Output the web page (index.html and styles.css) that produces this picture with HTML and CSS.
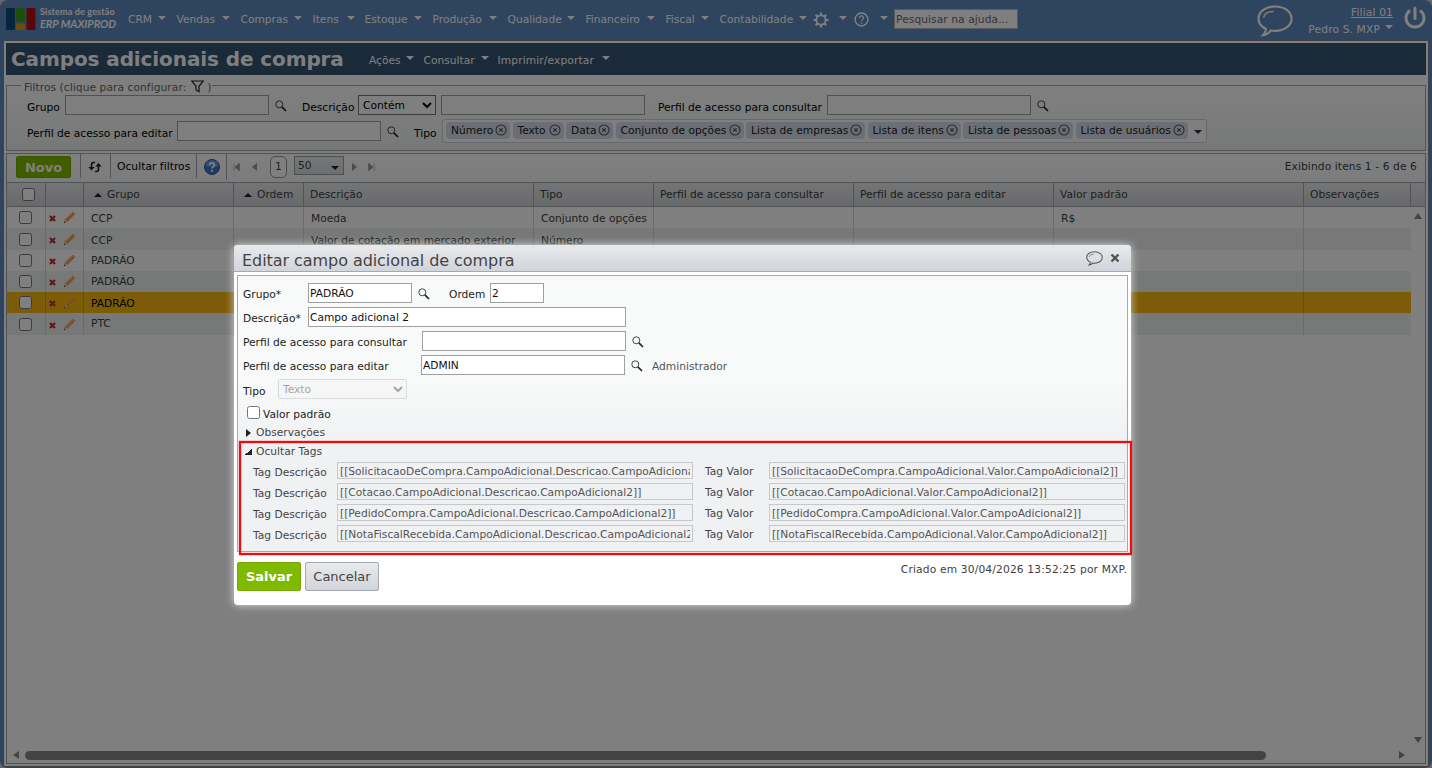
FILE: index.html
```html
<!DOCTYPE html>
<html lang="pt-BR">
<head>
    <meta charset="UTF-8">
    <title>Campos adicionais de compra</title>
    <link rel="stylesheet" href="styles.css">
</head>
<body>
    <!-- ícones reutilizados -->
    <svg class="defs" width="0" height="0">
        <symbol id="lupa" viewBox="0 0 12 12">
            <circle cx="4.300" cy="4.300" r="3.500" fill="none" stroke="#444" stroke-width="1"/>
            <path d="M6.900 6.900L11 11" stroke="#222" stroke-width="1.700"/>
        </symbol>
        <symbol id="lapis" viewBox="0 0 14 14">
            <path d="M1 13l1.200-4L10.600.9l2.500 2.300L4.700 11.500z" fill="#f0953e"/>
            <path d="M2.500 9.200L10.600 1.200l1 .9-8 8z" fill="#ffb469"/>
            <path d="M1 13l1.200-4 2.500 2.500z" fill="#ecd2a8"/>
            <path d="M.8 13.300l.7-1.900 1.100 1.200z" fill="#444"/>
        </symbol>
        <symbol id="excluir" viewBox="0 0 7 7">
            <path d="M1 1l5 5M6 1L1 6" stroke="#c2262b" stroke-width="2.100"/>
        </symbol>
        <symbol id="remover" viewBox="0 0 12 12">
            <circle cx="6" cy="6" r="5" fill="none" stroke="#555" stroke-width="1.100"/>
            <path d="M4.300 4.300l3.400 3.400M7.700 4.300L4.300 7.700" stroke="#555" stroke-width="1.200"/>
        </symbol>
        <symbol id="balao" viewBox="0 0 36 32">
            <path d="M18 1.500C8.600 1.500 1.500 6.500 1.500 13.500c0 4.500 2.800 8.200 7.300 10.200.3 2.600-.8 4.800-2.600 6.400 3.300-.3 5.800-1.800 7.400-4.600 1.400.3 2.900.4 4.400.4 9.400 0 16.500-5.200 16.500-12.200S27.400 1.500 18 1.500z" fill="none" stroke="currentColor" stroke-width="2.200"/>
            <path d="M6.500 12.500C7.500 9 11.500 6.700 16.500 6.500" fill="none" stroke="currentColor" stroke-width="1.500"/>
        </symbol>
    </svg>

    <div class="page">
        <div class="topbar">
            <div class="logo">
                <svg width="30" height="22" viewBox="0 0 30 22">
                    <rect x="0" y="0" width="9" height="22" rx="1.500" fill="#0d4a7c"/>
                    <rect x="10" y="0" width="9" height="14" rx="1.500" fill="#3f9a1a"/>
                    <rect x="10" y="15.500" width="9" height="6.500" rx="1.500" fill="#d99a14"/>
                    <rect x="20.500" y="0" width="9" height="22" rx="1.500" fill="#b80d12"/>
                </svg>
                <div class="logo-text">
                    <span class="logo-small">Sistema de gestão</span>
                    <span class="logo-big">ERP MAXIPROD</span>
                </div>
            </div>
            <div class="menu">
                <span class="m-crm">CRM<i></i></span>
                <span class="m-vendas">Vendas<i></i></span>
                <span class="m-compras">Compras<i></i></span>
                <span class="m-itens">Itens<i></i></span>
                <span class="m-estoque">Estoque<i></i></span>
                <span class="m-producao">Produção<i></i></span>
                <span class="m-qualidade">Qualidade<i></i></span>
                <span class="m-financeiro">Financeiro<i></i></span>
                <span class="m-fiscal">Fiscal<i></i></span>
                <span class="m-contab">Contabilidade<i></i></span>
                <span class="m-icon">
                    <svg width="16" height="16" viewBox="0 0 16 16">
                        <circle cx="8" cy="8" r="4.600" fill="none" stroke="#fff" stroke-width="1.800"/>
                        <path d="M8 .5v3M8 12.500v3M.5 8h3M12.500 8h3M2.700 2.700l2 2M11.300 11.300l2 2M13.300 2.700l-2 2M4.700 11.300l-2 2" stroke="#fff" stroke-width="2.200"/>
                    </svg><i></i>
                </span>
                <span class="m-icon">
                    <svg width="15" height="15" viewBox="0 0 15 15">
                        <circle cx="7.500" cy="7.500" r="6.400" fill="none" stroke="#fff" stroke-width="1.500"/>
                        <path d="M5.500 6c0-2.800 4.200-2.600 4.100-.2C9.500 7.300 7.600 7.400 7.500 9M7.500 10.300v1.400" fill="none" stroke="#fff" stroke-width="1.200"/>
                    </svg><i></i>
                </span>
            </div>
            <input class="help-search" type="text" value="Pesquisar na ajuda...">
            <svg class="chat" width="36" height="32"><use href="#balao"/></svg>
            <div class="user">
                <a href="#">Filial 01</a>
                <span>Pedro S. MXP<i></i></span>
            </div>
            <svg class="power" width="22" height="24" viewBox="0 0 22 24">
                <path d="M6 4.500a9 9 0 1 0 10 0" fill="none" stroke="#fff" stroke-width="3"/>
                <path d="M11 2v10.500" stroke="#fff" stroke-width="3" stroke-linecap="round"/>
            </svg>
        </div>

        <div class="main">
            <div class="titlebar">
                <h1>Campos adicionais de compra</h1>
                <span class="t-acoes">Ações<i></i></span>
                <span class="t-consultar">Consultar<i></i></span>
                <span class="t-imprimir">Imprimir/exportar<i></i></span>
            </div>

            <div class="filters">
                <div class="legend">Filtros (clique para configurar:
                    <svg width="13" height="13" viewBox="0 0 13 13"><path d="M.8 1h11.400L8 6.300v5.500L5 10V6.300z" fill="none" stroke="#222" stroke-width="1.200"/></svg>)</div>
                <div class="filter-row">
                    <label class="f-grupo">Grupo</label>
                    <input class="box" type="text">
                    <svg class="lupa"><use href="#lupa"/></svg>
                    <label class="f-desc">Descrição</label>
                    <select class="f-select"><option>Contém</option></select>
                    <input class="box" type="text">
                    <label class="f-perfil">Perfil de acesso para consultar</label>
                    <input class="box" type="text">
                    <svg class="lupa"><use href="#lupa"/></svg>
                </div>
                <div class="filter-row">
                    <label class="f-editar">Perfil de acesso para editar</label>
                    <input class="box" type="text">
                    <svg class="lupa"><use href="#lupa"/></svg>
                    <label class="f-tipo">Tipo</label>
                    <div class="chips">
                        <span class="chip c1">Número<svg><use href="#remover"/></svg></span>
                        <span class="chip c2">Texto<svg><use href="#remover"/></svg></span>
                        <span class="chip c3">Data<svg><use href="#remover"/></svg></span>
                        <span class="chip c4">Conjunto de opções<svg><use href="#remover"/></svg></span>
                        <span class="chip c5">Lista de empresas<svg><use href="#remover"/></svg></span>
                        <span class="chip c6">Lista de itens<svg><use href="#remover"/></svg></span>
                        <span class="chip c7">Lista de pessoas<svg><use href="#remover"/></svg></span>
                        <span class="chip c8">Lista de usuários<svg><use href="#remover"/></svg></span>
                        <i></i>
                    </div>
                </div>
            </div>

            <div class="grid">
                <div class="toolbar">
                    <button class="btn-novo">Novo</button>
                    <div class="tool refresh">
                        <svg width="14" height="12" viewBox="0 0 14 12">
                            <path d="M7 1.500H5.500Q3.500 1.500 3.500 4v4M7 10.500h1.500q2 0 2-2.500V4" fill="none" stroke="#222" stroke-width="1.600"/>
                            <path d="M.3 6h6.400L3.500 9.600zM7.300 5.500h6.400L10.500 2z" fill="#222"/>
                        </svg>
                    </div>
                    <div class="tool ocultar">Ocultar filtros</div>
                    <div class="tool ajuda">
                        <svg width="16" height="16" viewBox="0 0 16 16">
                            <circle cx="8" cy="8" r="7.500" fill="#3f76c6" stroke="#2b57a0"/>
                            <path d="M1.500 7a6.500 6 0 0 1 13 0Q8 9 1.500 7z" fill="#6d9bdd"/>
                            <path d="M5.700 6.200c0-3 4.700-2.900 4.700-.2 0 1.700-2.300 1.700-2.300 3.500M8.100 10.800v2" fill="none" stroke="#fff" stroke-width="1.800"/>
                        </svg>
                    </div>
                    <div class="pager">
                        <svg width="7" height="8" viewBox="0 0 7 8"><path d="M1 0v8M6.500 0v8L2 4z" fill="#999" stroke="#999" stroke-width=".6"/></svg>
                        <svg width="5" height="8" viewBox="0 0 5 8"><path d="M5 0v8L0 4z" fill="#999"/></svg>
                        <span class="current">1</span>
                        <span class="size">50<i></i></span>
                        <svg width="5" height="8" viewBox="0 0 5 8"><path d="M0 0v8l5-4z" fill="#999"/></svg>
                        <svg width="7" height="8" viewBox="0 0 7 8"><path d="M6.200 0v8M.5 0v8L5 4z" fill="#999" stroke="#999" stroke-width=".6"/></svg>
                    </div>
                    <div class="count">Exibindo itens 1 - 6 de 6</div>
                </div>

                <table>
                    <colgroup>
                        <col class="w1"><col class="w2"><col class="w3"><col class="w4"><col class="w5"><col class="w6"><col class="w7"><col class="w7"><col class="w8"><col class="w9"><col class="w10">
                    </colgroup>
                    <tr class="head">
                        <th class="chk"><input type="checkbox"></th>
                        <th></th>
                        <th><b></b>Grupo</th>
                        <th><b></b>Ordem</th>
                        <th>Descrição</th>
                        <th>Tipo</th>
                        <th>Perfil de acesso para consultar</th>
                        <th>Perfil de acesso para editar</th>
                        <th>Valor padrão</th>
                        <th>Observações</th>
                        <th></th>
                    </tr>
                    <tr class="low">
                        <td class="chk"><input type="checkbox"></td>
                        <td class="acts"><svg class="del"><use href="#excluir"/></svg><svg class="edit"><use href="#lapis"/></svg></td>
                        <td>CCP</td><td></td><td>Moeda</td><td>Conjunto de opções</td><td></td><td></td><td>R$</td><td></td><td class="rail"></td>
                    </tr>
                    <tr class="alt tall low">
                        <td class="chk"><input type="checkbox"></td>
                        <td class="acts"><svg class="del"><use href="#excluir"/></svg><svg class="edit"><use href="#lapis"/></svg></td>
                        <td>CCP</td><td></td><td>Valor de cotação em mercado exterior</td><td>Número</td><td></td><td></td><td></td><td></td><td class="rail"></td>
                    </tr>
                    <tr>
                        <td class="chk"><input type="checkbox"></td>
                        <td class="acts"><svg class="del"><use href="#excluir"/></svg><svg class="edit"><use href="#lapis"/></svg></td>
                        <td>PADRÃO</td><td></td><td></td><td></td><td></td><td></td><td></td><td></td><td class="rail"></td>
                    </tr>
                    <tr class="alt">
                        <td class="chk"><input type="checkbox"></td>
                        <td class="acts"><svg class="del"><use href="#excluir"/></svg><svg class="edit"><use href="#lapis"/></svg></td>
                        <td>PADRÃO</td><td></td><td></td><td></td><td></td><td></td><td></td><td></td><td class="rail"></td>
                    </tr>
                    <tr class="selected low">
                        <td class="chk"><input type="checkbox"></td>
                        <td class="acts"><svg class="del"><use href="#excluir"/></svg><svg class="edit"><use href="#lapis"/></svg></td>
                        <td>PADRÃO</td><td></td><td></td><td></td><td></td><td></td><td></td><td></td><td class="rail"></td>
                    </tr>
                    <tr class="alt tall">
                        <td class="chk"><input type="checkbox"></td>
                        <td class="acts"><svg class="del"><use href="#excluir"/></svg><svg class="edit"><use href="#lapis"/></svg></td>
                        <td>PTC</td><td></td><td></td><td></td><td></td><td></td><td></td><td></td><td class="rail"></td>
                    </tr>
                </table>

                <!-- barras de rolagem -->
                <div class="vscroll"><i class="up"></i><i class="down"></i></div>
                <div class="hscroll"><i class="left"></i><div class="thumb"></div><i class="right"></i></div>
            </div>
        </div>
    </div>

    <div class="overlay"></div>

    <div class="modal">
        <div class="modal-head">
            <h2>Editar campo adicional de compra</h2>
            <svg class="modal-chat" width="17" height="15"><use href="#balao"/></svg>
            <svg width="10" height="10" viewBox="0 0 10 10"><path d="M1.500 1.500l7 7M8.500 1.500l-7 7" stroke="#555" stroke-width="2.400"/></svg>
        </div>
        <div class="form">
            <div class="row">
                <label class="l-grupo">Grupo*</label>
                <input class="i-grupo" type="text" value="PADRÃO">
                <svg class="lupa"><use href="#lupa"/></svg>
                <label class="l-ordem">Ordem</label>
                <input class="i-ordem" type="text" value="2">
            </div>
            <div class="row">
                <label class="l-grupo">Descrição*</label>
                <input class="i-desc" type="text" value="Campo adicional 2">
            </div>
            <div class="row">
                <label class="l-cons">Perfil de acesso para consultar</label>
                <input class="i-perfil" type="text">
                <svg class="lupa"><use href="#lupa"/></svg>
            </div>
            <div class="row">
                <label class="l-edit">Perfil de acesso para editar</label>
                <input class="i-perfil" type="text" value="ADMIN">
                <svg class="lupa"><use href="#lupa"/></svg>
                <span class="admin">Administrador</span>
            </div>
            <div class="row">
                <label class="l-tipo">Tipo</label>
                <select disabled><option>Texto</option></select>
            </div>
            <div class="row check">
                <input type="checkbox"><label>Valor padrão</label>
            </div>
            <div class="toggle"><i class="closed"></i>Observações</div>
            <div class="toggle"><i class="open"></i>Ocultar Tags</div>
            <div class="tags">
                <label>Tag Descrição</label>
                <input type="text" readonly value="[[SolicitacaoDeCompra.CampoAdicional.Descricao.CampoAdicional2]]">
                <label class="valor">Tag Valor</label>
                <input type="text" readonly value="[[SolicitacaoDeCompra.CampoAdicional.Valor.CampoAdicional2]]">
                <label>Tag Descrição</label>
                <input type="text" readonly value="[[Cotacao.CampoAdicional.Descricao.CampoAdicional2]]">
                <label class="valor">Tag Valor</label>
                <input type="text" readonly value="[[Cotacao.CampoAdicional.Valor.CampoAdicional2]]">
                <label>Tag Descrição</label>
                <input type="text" readonly value="[[PedidoCompra.CampoAdicional.Descricao.CampoAdicional2]]">
                <label class="valor">Tag Valor</label>
                <input type="text" readonly value="[[PedidoCompra.CampoAdicional.Valor.CampoAdicional2]]">
                <label>Tag Descrição</label>
                <input type="text" readonly value="[[NotaFiscalRecebida.CampoAdicional.Descricao.CampoAdicional2]]">
                <label class="valor">Tag Valor</label>
                <input type="text" readonly value="[[NotaFiscalRecebida.CampoAdicional.Valor.CampoAdicional2]]">
            </div>
        </div>
        <div class="modal-foot">
            <button class="btn-salvar">Salvar</button>
            <button class="btn-cancelar">Cancelar</button>
            <span>Criado em 30/04/2026 13:52:25 por MXP.</span>
        </div>
        <div class="destaque"></div>
    </div>
</body>
</html>
```
FILE: styles.css
```css
* {
    box-sizing: border-box;
}

body {
    margin: 0;
    height: 768px;
    overflow: hidden;
    background: #c8ccd2;
    font-family: Verdana, "DejaVu Sans", sans-serif;
    font-size: 10.67px;
    color: #3c3f42;
}

input, select, button {
    font-family: inherit;
    font-size: inherit;
    margin: 0;
}

label, span, th, td, .count, .tool {
    white-space: nowrap;
}

svg {
    flex: none;
}

.defs {
    position: absolute;
}

/* página */
.page {
    height: 768px;
    padding: 0 4px 2px;
    background: #5f89bf;
    border-radius: 8px;
    display: flex;
    flex-direction: column;
}

.topbar {
    height: 41px;
    display: flex;
    color: #fff;
}

.logo {
    display: flex;
    width: 124px;
    padding: 8px 0 0 2px;
    gap: 4px;
}

.logo-text {
    font-family: Lato, sans-serif;
    font-weight: bold;
    display: flex;
    flex-direction: column;
    white-space: nowrap;
    margin-top: -1px;
}

.logo-small {
    font-size: 9px;
    line-height: 9px;
    letter-spacing: 0.15px;
}

.logo-big {
    font-size: 11px;
    line-height: 15px;
    font-style: italic;
    letter-spacing: -0.07px;
}

.menu {
    display: flex;
    padding-top: 13px;
    line-height: 13px;
    width: 766px;
}

.menu span {
    display: flex;
    justify-content: space-between;
    flex: none;
}

.topbar i, .titlebar i {
    width: 8px;
    height: 0;
    border: 4px solid transparent;
    border-top-color: #fff;
    border-bottom: 0;
    margin-top: 3px;
}

.m-crm { width: 38px; margin-right: 10.5px; }
.m-vendas { width: 53px; margin-right: 11px; }
.m-compras { width: 61px; margin-right: 11px; }
.m-itens { width: 42px; margin-right: 10px; }
.m-estoque { width: 57px; margin-right: 11px; }
.m-producao { width: 64px; margin-right: 11px; }
.m-qualidade { width: 67px; margin-right: 11px; }
.m-financeiro { width: 69px; margin-right: 11px; }
.m-fiscal { width: 43px; margin-right: 11px; }
.m-contab { width: 87px; margin-right: 6px; }
.m-icon { width: 34px; margin-right: 7px; }
.m-icon svg { margin-top: -1px; }

.help-search {
    width: 124px;
    height: 20px;
    margin-top: 9px;
    padding: 0 1px;
    border: 1px solid #b5b5b5;
    background: #fff;
    color: #666;
    letter-spacing: 0.08px;
}

.chat {
    margin: 5px 0 0 239px;
}

.user {
    width: 100px;
    display: flex;
    flex-direction: column;
    align-items: flex-end;
    padding-top: 6px;
    line-height: 13px;
    gap: 4px;
    letter-spacing: 0.15px;
}

.user a {
    color: #fff;
}

.user span {
    display: flex;
    gap: 5px;
}

.user i {
    margin-top: 2px;
}

.power {
    margin: 6px 0 0 11px;
}

.main {
    flex: 1;
    background: #fff;
    border: 2px solid #fff;
    box-shadow: 0 0 0 1px #7d838c;
    display: flex;
    flex-direction: column;
}

.titlebar {
    height: 32px;
    background: #365470;
    color: #fff;
    display: flex;
    padding: 11px 0 0 5px;
    line-height: 14px;
}

.titlebar h1 {
    margin: -5px 0 0;
    width: 358px;
    font-size: 20px;
    line-height: 20px;
    letter-spacing: -0.1px;
    white-space: nowrap;
}

.titlebar span {
    display: flex;
    justify-content: space-between;
}

.titlebar i {
    margin-top: 2px;
}

.t-acoes { width: 45px; margin-right: 9.5px; }
.t-consultar { width: 65px; margin-right: 9px; }
.t-imprimir { width: 112px; letter-spacing: 0.12px; }

/* filtros */
.filters {
    margin-top: 10px;
    height: 66px;
    border: 1px solid #a2a6ae;
    background: linear-gradient(#fff, #f8faf9 40%, #eff3f1);
    color: #000;
}

.legend {
    display: flex;
    align-items: center;
    width: 191px;
    height: 13px;
    margin: -5px 0 0 14px;
    padding-left: 3px;
    background: #fff;
    color: #666;
    letter-spacing: 0.07px;
    white-space: nowrap;
}

.legend svg {
    margin: -3px 3px 0 5px;
}

.filter-row {
    display: flex;
    align-items: center;
    height: 20px;
    margin: 1px 0 6px;
    padding-left: 20px;
}

.filter-row label {
    padding-top: 4px;
}

.box {
    width: 204px;
    height: 20px;
    border: 1px solid #a0a0a0;
    background: #fff;
    padding: 0 2px;
}

.lupa {
    width: 12px;
    height: 12px;
    margin: 1px 0 0 6px;
}

.f-grupo { width: 38px; }
.f-desc { width: 56px; margin-left: 15px; }
.f-select { width: 78px; height: 20px; margin-right: 5px; background: #fff; color: #000; }
.f-perfil { width: 169px; margin-left: 13px; }
.f-editar { width: 150px; }
.f-tipo { width: 28px; margin-left: 15px; }

.chips {
    display: flex;
    align-items: center;
    width: 765px;
    height: 24px;
    padding-left: 3px;
    gap: 2.5px;
    background: #fff;
    border: 1px solid #ccd0d8;
    border-radius: 3px;
    flex: none;
}

.chip {
    display: flex;
    align-items: center;
    justify-content: space-between;
    height: 17px;
    margin-bottom: 2px;
    padding: 1px 3px 0 5px;
    background: #d6dde8;
    border-radius: 4px;
    color: #222;
}

.chip svg {
    width: 12px;
    height: 12px;
    margin-top: -1px;
}

.c1 { width: 64px; }
.c2 { width: 51px; }
.c3 { width: 47px; }
.c4 { width: 128px; }
.c5 { width: 119px; }
.c6 { width: 93px; }
.c7 { width: 110px; }
.c8 { width: 112px; }

.chips i {
    margin: 2px 0 0 4px;
    border: 4px solid transparent;
    border-top-color: #333;
    border-bottom: 0;
}

/* grade */
.grid {
    flex: 1;
    margin-top: 2px;
    border: 1px solid #a2a6ae;
    position: relative;
    display: flex;
    flex-direction: column;
}

.toolbar {
    display: flex;
    height: 28px;
    background: linear-gradient(#fff, #f6f8f7);
}

.btn-novo {
    width: 55px;
    height: 22px;
    margin: 2px 9px 0;
    padding: 0;
    border: 1px solid #76a800;
    border-radius: 2px;
    background: #80ba00;
    color: #fff;
    font-size: 13px;
    font-weight: bold;
}

.tool {
    height: 24px;
    border-left: 1px solid #a2a6ae;
    line-height: 26px;
}

.refresh { width: 30px; padding: 3px 0 0 7px; }
.ocultar { width: 86px; padding-left: 6px; color: #000; letter-spacing: 0.05px; }
.ajuda { width: 30px; padding: 5px 0 0 7px; line-height: 0; }

.pager {
    display: flex;
    align-items: center;
    height: 26px;
    border-left: 1px solid #a2a6ae;
    padding-left: 6px;
}

.current {
    width: 17px;
    height: 22px;
    margin: 0 7px 0 13px;
    border: 1px solid #92959c;
    border-radius: 5px;
    text-align: center;
    line-height: 20px;
    background: #fff;
}

.pager svg:nth-child(2) { margin-left: 12px; }
.pager svg:nth-child(6) { margin-left: 11px; }

.size {
    display: flex;
    justify-content: space-between;
    width: 50px;
    height: 19px;
    padding: 0 4px 0 3px;
    margin: -3px 8px 0 0;
    border: 1px solid #989ea8;
    background: linear-gradient(#eceef0, #d8dbe0);
    line-height: 17px;
}

.size i {
    align-self: center;
    margin-top: 4px;
    border: 4px solid transparent;
    border-top-color: #222;
    border-bottom: 0;
}

.count {
    margin-left: auto;
    padding: 6px 8px 0 0;
    line-height: 13px;
    letter-spacing: 0.11px;
}

table {
    table-layout: fixed;
    width: 1418px;
    border-collapse: separate;
    border-spacing: 0;
}

.w1 { width: 39px; }
.w2 { width: 38px; }
.w3 { width: 150px; }
.w4 { width: 70px; }
.w5 { width: 230px; }
.w6 { width: 120px; }
.w7 { width: 200px; }
.w8 { width: 250px; }
.w9 { width: 107px; }
.w10 { width: 14px; }

th {
    height: 25px;
    padding: 0 6px;
    line-height: 13px;
    text-align: left;
    font-weight: normal;
    border: solid #a2a6ae;
    border-width: 1px 1px 1px 0;
    background: linear-gradient(#e9eaec, #cfd1d6);
}

th:last-child {
    border-right: 0;
}

th b {
    display: inline-block;
    margin: 0 5px 1px 4px;
    border: 4px solid transparent;
    border-bottom-color: #222;
    border-top: 0;
}

td {
    height: 21px;
    padding: 0 0 0 7px;
    line-height: 13px;
    border-right: 1px solid #d0d4d6;
    overflow: hidden;
}

.tall td {
    height: 22px;
}

.tall td:not(.chk):not(.acts) {
    padding-bottom: 1px;
}

tr.low td:not(.chk):not(.acts) {
    padding-top: 2px;
    padding-bottom: 0;
}

.alt td {
    background: #eff3f1;
}

.selected td {
    background: #fbb911;
    color: #000;
    border-right-color: #cf9a12;
}

td:nth-child(10) {
    border-right: 0;
}

tr td.rail {
    background: #fff;
    border: 0;
}

.chk {
    padding: 0 0 0 12px;
    line-height: 0;
}

th.chk {
    padding-left: 15px;
}

.chk input {
    display: block;
    width: 13px;
    height: 13px;
}

.acts {
    padding: 0 0 0 3px;
    line-height: 0;
}

.del {
    width: 7px;
    height: 7px;
    margin: 0 7px 2px 0;
}

.edit {
    width: 13px;
    height: 13px;
}

.vscroll {
    position: absolute;
    right: 3px;
    top: 59px;
    height: 530px;
    display: flex;
    flex-direction: column;
    justify-content: space-between;
}

.vscroll i, .hscroll i {
    border: 4px solid transparent;
}

.vscroll .up { border-bottom: 6px solid #888; border-top: 0; }
.vscroll .down { border-top: 6px solid #888; border-bottom: 0; }
.hscroll .left { border-right: 6px solid #888; border-left: 0; }
.hscroll .right { border-left: 6px solid #888; border-right: 0; }

.hscroll {
    margin-top: auto;
    display: flex;
    align-items: center;
    height: 16px;
    padding: 0 20px 0 6px;
}

.thumb {
    width: 1241px;
    height: 9px;
    margin: 0 auto 0 6px;
    border-radius: 5px;
    background: #888;
}

.overlay {
    position: absolute;
    inset: 0;
    background: rgba(0, 0, 0, 0.5);
}

/* janela de edição */
.modal {
    position: absolute;
    left: 234px;
    top: 245px;
    width: 897px;
    height: 360px;
    background: #fff;
    border-radius: 4px;
    box-shadow: 0 0 8px rgba(255, 255, 255, 0.75);
    padding: 0 3px;
}

.modal-head {
    display: flex;
    height: 27px;
    margin: 0 -3px;
    padding: 7px 11px 0 8px;
    border-bottom: 1px solid #a2a9b3;
    border-radius: 4px 4px 0 0;
    background: linear-gradient(#e9eaec, #d1d4da);
    color: #555;
}

.modal-head h2 {
    margin: 1px auto 0 0;
    font-size: 16px;
    line-height: 16px;
    font-weight: normal;
    letter-spacing: -0.06px;
    color: #444;
}

.modal-head svg:last-child {
    margin: 1px 0 0 7px;
}

.modal-chat {
    margin-top: -1px;
}

.form {
    height: 277px;
    margin-top: 3px;
    padding: 7px 0 0 5px;
    border: 1px solid #a2a9b3;
    background: linear-gradient(#f8faf9 0, #f8faf9 38%, #f0f1f3 60%);
    color: #222;
}

.row {
    display: flex;
    height: 20px;
    margin-bottom: 4px;
    align-items: center;
}

.row label, .admin {
    padding-top: 3px;
}

.row input[type=text] {
    height: 20px;
    padding: 0 1px;
    border: 1px solid #a0a0a0;
    background: #fff;
    color: #111;
}

.row .l-grupo { width: 65px; }
.row .i-grupo { width: 104px; }
.row .l-ordem { width: 41px; margin-left: 19px; }
.row .i-ordem { width: 54px; }
.row .i-desc { width: 318px; }
.row .l-cons { width: 179px; }
.row .l-edit { width: 178px; }
.row .i-perfil { width: 204px; }
.row .l-tipo { width: 35px; padding-top: 4px; }

.admin {
    margin-left: 9px;
    color: #555;
}

.row select {
    width: 129px;
    height: 20px;
}

.check {
    margin-bottom: 0;
}

.row.check input {
    width: 13px;
    height: 13px;
    margin: -1px 3px 0 4px;
}

.toggle {
    display: flex;
    align-items: center;
    height: 19px;
    color: #444;
}

.toggle i {
    margin: 0 5px 0 3px;
}

.closed {
    border: 4px solid transparent;
    border-left: 5px solid #222;
    border-right: 0;
}

.toggle .open {
    width: 7px;
    height: 7px;
    margin: 0 4px 0 2px;
    background: linear-gradient(135deg, transparent 50%, #222 50%);
}

.tags {
    display: grid;
    grid-template-columns: 84px 356px 76px 356px;
    grid-auto-rows: 17px;
    row-gap: 4px;
    padding: 1px 0 0 10px;
    color: #444;
}

.tags label {
    line-height: 21px;
}

.tags .valor {
    padding-left: 12px;
    line-height: 19px;
}

.tags input {
    height: 17px;
    padding: 1px 2px 0;
    border: 1px solid #c6c8cb;
    background: #f0f1f3;
    color: #555;
}

.modal-foot {
    display: flex;
    padding-top: 10px;
    gap: 4px;
}

.modal-foot button {
    height: 29px;
    padding: 0;
    border-radius: 2px;
    font-size: 13px;
}

.btn-salvar {
    width: 64px;
    border: 1px solid #76a800;
    background: #80ba00;
    color: #fff;
    font-weight: bold;
}

.btn-cancelar {
    width: 74px;
    border: 1px solid #a2a9b3;
    background: linear-gradient(#e9eaec, #d1d4da);
    color: #444;
}

.modal-foot span {
    margin: 1px 1px 0 auto;
    line-height: 13px;
    letter-spacing: 0.16px;
}

/* contorno de destaque das tags */
.destaque {
    position: absolute;
    left: 5px;
    top: 196px;
    width: 893px;
    height: 114px;
    border: 2px solid #f00c0c;
    box-shadow: 0 0 0 1px rgba(255, 0, 0, 0.15), inset 0 0 0 1px rgba(255, 0, 0, 0.15);
}
```
